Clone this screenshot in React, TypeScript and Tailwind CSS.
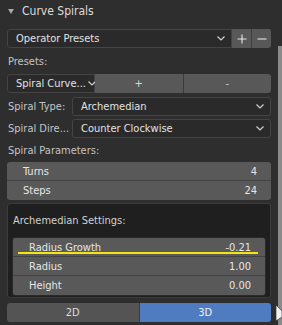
import React from 'react'

// Blender-style operator redo panel: "Curve Spirals"

function Chevron() {
  return (
    <svg width="8" height="5" viewBox="0 0 8 5" className="shrink-0">
      <polyline points="0.5,0.5 4,4 7.5,0.5" fill="none" stroke="#d0d0d0" strokeWidth="1.2" />
    </svg>
  )
}

function Dropdown({ text, className = '' }: { text: string; className?: string }) {
  return (
    <div
      className={`flex items-center justify-between gap-[2px] border border-[#444444] bg-[#2a2a2a] pl-[8px] pr-[6px] text-[#e2e2e2] ${className}`}
    >
      <span className="whitespace-nowrap">{text}</span>
      <Chevron />
    </div>
  )
}

function LabeledMenu({ label, value }: { label: string; value: string }) {
  return (
    <div className="flex h-[19px] items-center">
      <span className="w-[65px] shrink-0 pl-[1px] text-[#c4c4c4]">{label}</span>
      <Dropdown text={value} className="h-full flex-1 rounded-[3px]" />
    </div>
  )
}

function NumberRow({ label, value, last = false, children }: { label: string; value: string; last?: boolean; children?: React.ReactNode }) {
  return (
    <div
      className={`relative flex h-[19px] items-center justify-between bg-[#595959] pl-[16px] pr-[14px] text-[#e6e6e6] ${last ? '' : 'border-b border-[#434343]'}`}
    >
      <span>{label}</span>
      <span>{value}</span>
      {children}
    </div>
  )
}

export default function App() {
  return (
    <div className="relative flex h-[325px] w-[282px] overflow-hidden bg-[#2e2e2e] font-['DejaVu_Sans_Condensed','DejaVu_Sans',sans-serif] text-[11px] leading-none">
      <div className="flex w-[278px] flex-col">
        <div className="flex h-[22px] items-center gap-[8px] pl-[8px] text-[12px] text-[#dcdcdc]">
          <svg width="6" height="5" viewBox="0 0 6 5">
            <polygon points="0,0 6,0 3,5" fill="#a8a8a8" />
          </svg>
          <span>Curve Spirals</span>
        </div>

        <div className="flex flex-col px-[7px]">
          <div className="mt-[7px] flex h-[19px]">
            <Dropdown text="Operator Presets" className="flex-1 rounded-l-[3px]" />
            <button className="flex w-[20px] items-center justify-center border-r border-[#3e3e3e] bg-[#585858]">
              <svg width="10" height="10" viewBox="0 0 10 10">
                <path d="M5 0.5V9.5M0.5 5H9.5" stroke="#e8e8e8" strokeWidth="1.1" />
              </svg>
            </button>
            <button className="flex w-[19px] items-center justify-center rounded-r-[3px] bg-[#585858]">
              <svg width="10" height="2" viewBox="0 0 10 2">
                <path d="M0.5 1H9.5" stroke="#e8e8e8" strokeWidth="1.1" />
              </svg>
            </button>
          </div>

          <div className="flex h-[26px] items-center pl-[1px] text-[#c4c4c4]">Presets:</div>

          <div className="flex h-[19px]">
            <Dropdown text="Spiral Curve..." className="w-[88px] rounded-l-[3px] pl-[7px] pr-[3px]" />
            <button className="flex flex-1 items-center justify-center border-r border-[#3a3a3a] bg-[#585858] text-[#d8d8d8]">
              +
            </button>
            <button className="flex flex-1 items-center justify-center rounded-r-[3px] bg-[#585858] text-[#c8c8c8]">
              -
            </button>
          </div>

          <div className="mt-[4px] flex flex-col gap-[3px]">
            <LabeledMenu label="Spiral Type:" value="Archemedian" />
            <LabeledMenu label="Spiral Dire..." value="Counter Clockwise" />
          </div>

          <div className="flex h-[24px] items-center pl-[1px] text-[#c4c4c4]">Spiral Parameters:</div>

          <div className="flex flex-col overflow-hidden rounded-[3px]">
            <NumberRow label="Turns" value="4" />
            <NumberRow label="Steps" value="24" last />
          </div>

          <div className="mt-[3px] flex h-[95px] flex-col rounded-[3px] border border-[#3c3c3c] bg-[#1f1f1f] px-[4px]">
            <div className="flex h-[33px] items-center pl-[1px] text-[#d2d2d2]">Archemedian Settings:</div>
            <div className="flex flex-col overflow-hidden rounded-[3px] border border-[#2a2a2a]">
              <NumberRow label="Radius Growth" value="-0.21">
                <div className="absolute bottom-[2px] left-[5px] h-[2px] w-[240px] bg-[#f4e411]" />
              </NumberRow>
              <NumberRow label="Radius" value="1.00" />
              <NumberRow label="Height" value="0.00" last />
            </div>
          </div>

          <div className="mt-[5px] flex h-[19px]">
            <button className="flex flex-1 items-center justify-center rounded-l-[3px] border-r border-[#3a3a3a] bg-[#545454] text-[#dcdcdc]">
              2D
            </button>
            <button className="flex flex-1 items-center justify-center rounded-r-[3px] bg-[#4f7cc0] text-[#f0f0f0]">
              3D
            </button>
          </div>
        </div>
      </div>

      <div className="mt-[46px] w-[4px] bg-[#8a8a8a]" />

      <svg width="6" height="16" viewBox="0 0 6 16" className="absolute bottom-[4px] right-0">
        <polygon points="0,0 6,6 6,12 0,16" fill="#f2f2f2" stroke="#222" strokeWidth="0.6" />
      </svg>
    </div>
  )
}
